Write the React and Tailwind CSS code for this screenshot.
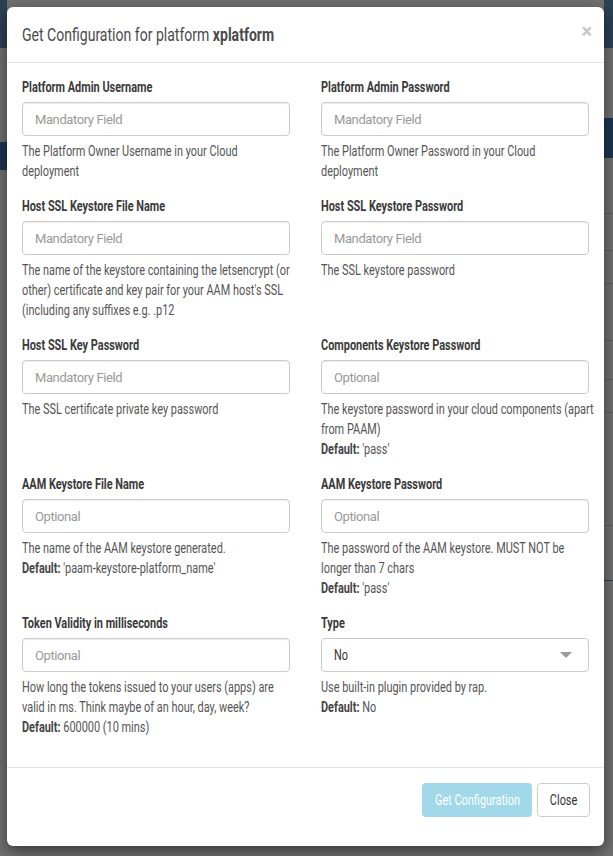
const fields = [
  {
    label: "Platform Admin Username",
    placeholder: "Mandatory Field",
    help: ["The Platform Owner Username in your Cloud", "deployment"],
  },
  {
    label: "Platform Admin Password",
    placeholder: "Mandatory Field",
    help: ["The Platform Owner Password in your Cloud", "deployment"],
  },
  {
    label: "Host SSL Keystore File Name",
    placeholder: "Mandatory Field",
    help: [
      "The name of the keystore containing the letsencrypt (or",
      "other) certificate and key pair for your AAM host's SSL",
      "(including any suffixes e.g. .p12",
    ],
  },
  {
    label: "Host SSL Keystore Password",
    placeholder: "Mandatory Field",
    help: ["The SSL keystore password"],
  },
  {
    label: "Host SSL Key Password",
    placeholder: "Mandatory Field",
    help: ["The SSL certificate private key password"],
  },
  {
    label: "Components Keystore Password",
    placeholder: "Optional",
    help: ["The keystore password in your cloud components (apart", "from PAAM)"],
    def: "'pass'",
  },
  {
    label: "AAM Keystore File Name",
    placeholder: "Optional",
    help: ["The name of the AAM keystore generated."],
    def: "'paam-keystore-platform_name'",
  },
  {
    label: "AAM Keystore Password",
    placeholder: "Optional",
    help: ["The password of the AAM keystore. MUST NOT be", "longer than 7 chars"],
    def: "'pass'",
  },
  {
    label: "Token Validity in milliseconds",
    placeholder: "Optional",
    help: [
      "How long the tokens issued to your users (apps) are",
      "valid in ms. Think maybe of an hour, day, week?",
    ],
    def: "600000 (10 mins)",
  },
  {
    label: "Type",
    select: "No",
    help: ["Use built-in plugin provided by rap."],
    def: "No",
  },
];

// the original font is a narrow one; Roboto squeezed horizontally stands in for it
function Field({ f }) {
  return (
    <div className="mb-[15px]">
      <label className="block w-max origin-left scale-x-[0.78] font-bold text-[14px] leading-[20px] mb-[5px] text-[#3a3a3a] whitespace-nowrap">
        {f.label}
      </label>
      {f.select ? (
        <div className="h-[34px] border border-[#ccc] rounded-[4px] px-[12px] flex items-center justify-between text-[14px] text-[#333] bg-white">
          <span className="inline-block origin-left scale-x-[0.78]">{f.select}</span>
          <span className="w-0 h-0 border-l-[6px] border-r-[6px] border-t-[6px] border-l-transparent border-r-transparent border-t-[#999] mr-[4px]" />
        </div>
      ) : (
        <input
          type="text"
          placeholder={f.placeholder}
          className="block w-full h-[34px] border border-[#ccc] rounded-[4px] px-[12px] text-[13px] tracking-[-0.4px] text-[#333] placeholder:text-[#999] shadow-[inset_0_1px_1px_rgba(0,0,0,0.075)] outline-none"
        />
      )}
      <div className="mt-[5px] w-max origin-left scale-x-[0.78] text-[14px] leading-[20px] text-[#555] whitespace-nowrap">
        {f.help.map((line) => (
          <div key={line}>{line}</div>
        ))}
        {f.def && (
          <div>
            <b className="text-[#444]">Default:</b> {f.def}
          </div>
        )}
      </div>
    </div>
  );
}

export default function App() {
  return (
    <div className="flex w-[613px] h-[856px] overflow-hidden bg-[#707070] font-['Roboto',sans-serif]">
      {/* dimmed page behind the modal, left edge */}
      <div className="w-[7px] flex flex-col">
        <div className="h-[48px] bg-[#2a4154]" />
        <div className="h-[94px]" />
        <div className="h-[28px] bg-[#1d3550]" />
      </div>

      {/* modal */}
      <div className="relative z-10 mt-[7px] w-[597px] self-start bg-white rounded-[6px] shadow-[0_5px_15px_rgba(0,0,0,0.5)]">
        <div className="flex items-center justify-between pl-[15px] pr-[12px] h-[56px] border-b border-[#e5e5e5]">
          <h4 className="w-max origin-left scale-x-[0.78] text-[18px] text-[#4a4a4a] whitespace-nowrap">
            Get Configuration for platform <b>xplatform</b>
          </h4>
          <span className="text-[20px] font-bold text-[#c5c5c5] leading-none -mt-[8px]">×</span>
        </div>

        <div className="px-[15px] pt-[14px] pb-[15px] grid grid-cols-2 gap-x-[31px]">
          {fields.map((f) => (
            <Field key={f.label} f={f} />
          ))}
        </div>

        <div className="flex justify-end gap-[5px] px-[14px] pt-[15px] pb-[29px] border-t border-[#e5e5e5]">
          <button className="w-[110px] h-[34px] flex items-center justify-center rounded-[4px] bg-[#a1d8ea] text-white text-[14px]">
            <span className="inline-block whitespace-nowrap scale-x-[0.78]">Get Configuration</span>
          </button>
          <button className="w-[53px] h-[34px] flex items-center justify-center rounded-[4px] border border-[#ccc] bg-white text-[#333] text-[14px]">
            <span className="inline-block scale-x-[0.78]">Close</span>
          </button>
        </div>
      </div>

      {/* dimmed page behind the modal, right edge */}
      <div className="flex-1 flex flex-col">
        <div className="h-[48px] bg-[#2a4154]" />
        <div className="h-[70px]" />
        <div className="h-[40px] bg-[#1d3550]" />
        <div className="h-[56px] border-b border-[#5e5e5e]" />
        <div className="h-[37px] border-b border-[#5e5e5e]" />
        <div className="h-[33px] border-b border-[#5e5e5e]" />
        <div className="h-[57px] border-b border-[#5e5e5e]" />
        <div className="h-[39px] border-b border-[#5e5e5e]" />
        <div className="h-[33px] border-b border-[#5e5e5e]" />
        <div className="h-[113px] border-b border-[#5e5e5e]" />
        <div className="h-[55px] border-b border-[#2c3e50]" />
      </div>
    </div>
  );
}
